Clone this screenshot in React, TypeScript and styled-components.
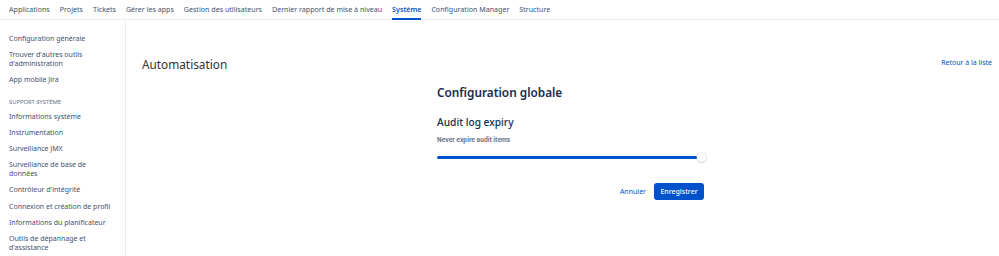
import React, { FC } from "react";
import styled, { createGlobalStyle } from "styled-components";

const GlobalStyle = createGlobalStyle`
  html, body {
    margin: 0;
    padding: 0;
    background: #fff;
    font-family: "Noto Sans", "Open Sans", sans-serif;
    color: #172b4d;
  }
`;

const TABS = [
  "Applications",
  "Projets",
  "Tickets",
  "Gérer les apps",
  "Gestion des utilisateurs",
  "Dernier rapport de mise à niveau",
  "Système",
  "Configuration Manager",
  "Structure",
];

const Page = styled.div`
  width: 999px;
  height: 256px;
  display: flex;
  flex-direction: column;
  overflow: hidden;
`;

const TopNav = styled.nav`
  display: flex;
  gap: 10px;
  padding-left: 9px;
  height: 20px;
  border-bottom: 1px solid #ebecf0;
  box-sizing: border-box;
`;

const Tab = styled.a<{ $active?: boolean }>`
  font-size: 7.1px;
  line-height: 18px;
  color: ${(p) => (p.$active ? "#0052cc" : "#42526e")};
  font-weight: ${(p) => (p.$active ? 600 : 400)};
  border-bottom: 2px solid ${(p) => (p.$active ? "#0052cc" : "transparent")};
  white-space: nowrap;
  height: 20px;
  box-sizing: border-box;
`;

const Body = styled.div`
  flex: 1;
  display: flex;
`;

const Sidebar = styled.aside`
  width: 126px;
  border-right: 1px solid #ebecf0;
  box-sizing: border-box;
  padding: 10.5px 0 0 9px;
  display: flex;
  flex-direction: column;
`;

const SideItem = styled.div`
  font-size: 7px;
  line-height: 9.5px;
  color: #42526e;
  padding: 3.3px 0;
`;

const SideHeading = styled.div`
  font-size: 5.8px;
  line-height: 8px;
  color: #5e6c84;
  text-transform: uppercase;
  margin-top: 10px;
  margin-bottom: 2px;
`;

const Main = styled.main`
  flex: 1;
  display: flex;
  flex-direction: column;
  padding: 36px 7px 0 16px;
`;

const PageHeader = styled.div`
  display: flex;
  justify-content: space-between;
  align-items: center;
  height: 16px;
`;

const PageTitle = styled.h1`
  margin: 0;
  font-size: 11.8px;
  font-weight: 400;
  color: #333;
  line-height: 16px;
`;

const BackLink = styled.a`
  font-size: 7px;
  color: #0052cc;
  line-height: 12px;
  margin-top: -2px;
`;

const Form = styled.div`
  width: 267px;
  margin-left: 295px;
  margin-top: 12px;
  display: flex;
  flex-direction: column;
`;

const FormTitle = styled.h2`
  margin: 0;
  font-size: 11.8px;
  font-weight: 600;
  line-height: 16px;
  color: #172b4d;
`;

const SectionTitle = styled.h3`
  margin: 15px 0 0;
  font-size: 10.2px;
  font-weight: 500;
  line-height: 14px;
  color: #172b4d;
`;

const Label = styled.label`
  margin-top: 7px;
  font-size: 6.7px;
  font-weight: 700;
  color: #6b778c;
  line-height: 8px;
  font-family: Roboto, "Noto Sans", sans-serif;
`;

const SliderWrap = styled.div`
  margin-top: 8px;
  height: 10px;
  display: flex;
  align-items: center;
  position: relative;
`;

const Track = styled.div`
  height: 3px;
  flex: 1;
  margin-right: 7px;
  background: #0052cc;
  border-radius: 2px;
`;

const Thumb = styled.div`
  position: absolute;
  right: -2px;
  top: 0.5px;
  width: 9px;
  height: 9px;
  border-radius: 50%;
  background: #fff;
  box-shadow: 0 0 2px rgba(9, 30, 66, 0.25), 0 1px 1px rgba(9, 30, 66, 0.12);
`;

const Actions = styled.div`
  margin-top: 21px;
  display: flex;
  justify-content: flex-end;
  align-items: center;
  gap: 8px;
`;

const LinkButton = styled.button`
  border: none;
  background: none;
  padding: 0;
  font-family: inherit;
  font-size: 7px;
  color: #0052cc;
  line-height: 17px;
`;

const PrimaryButton = styled.button`
  border: none;
  background: #0052cc;
  color: #fff;
  font-family: inherit;
  font-size: 7px;
  font-weight: 500;
  height: 17px;
  width: 50px;
  padding: 0;
  border-radius: 3px;
`;

const App: FC = () => (
  <>
    <GlobalStyle />
    <Page>
      <TopNav>
        {TABS.map((t) => (
          <Tab key={t} $active={t === "Système"}>
            {t}
          </Tab>
        ))}
      </TopNav>
      <Body>
        <Sidebar>
          <SideItem>Configuration générale</SideItem>
          <SideItem>
            Trouver d'autres outils
            <br />
            d'administration
          </SideItem>
          <SideItem>App mobile Jira</SideItem>
          <SideHeading>Support système</SideHeading>
          <SideItem>Informations système</SideItem>
          <SideItem>Instrumentation</SideItem>
          <SideItem>Surveillance JMX</SideItem>
          <SideItem>
            Surveillance de base de
            <br />
            données
          </SideItem>
          <SideItem>Contrôleur d'intégrité</SideItem>
          <SideItem>Connexion et création de profil</SideItem>
          <SideItem>Informations du planificateur</SideItem>
          <SideItem>
            Outils de dépannage et
            <br />
            d'assistance
          </SideItem>
        </Sidebar>
        <Main>
          <PageHeader>
            <PageTitle>Automatisation</PageTitle>
            <BackLink>Retour à la liste</BackLink>
          </PageHeader>
          <Form>
            <FormTitle>Configuration globale</FormTitle>
            <SectionTitle>Audit log expiry</SectionTitle>
            <Label>Never expire audit items</Label>
            <SliderWrap>
              <Track />
              <Thumb />
            </SliderWrap>
            <Actions>
              <LinkButton>Annuler</LinkButton>
              <PrimaryButton>Enregistrer</PrimaryButton>
            </Actions>
          </Form>
        </Main>
      </Body>
    </Page>
  </>
);

export default App;
